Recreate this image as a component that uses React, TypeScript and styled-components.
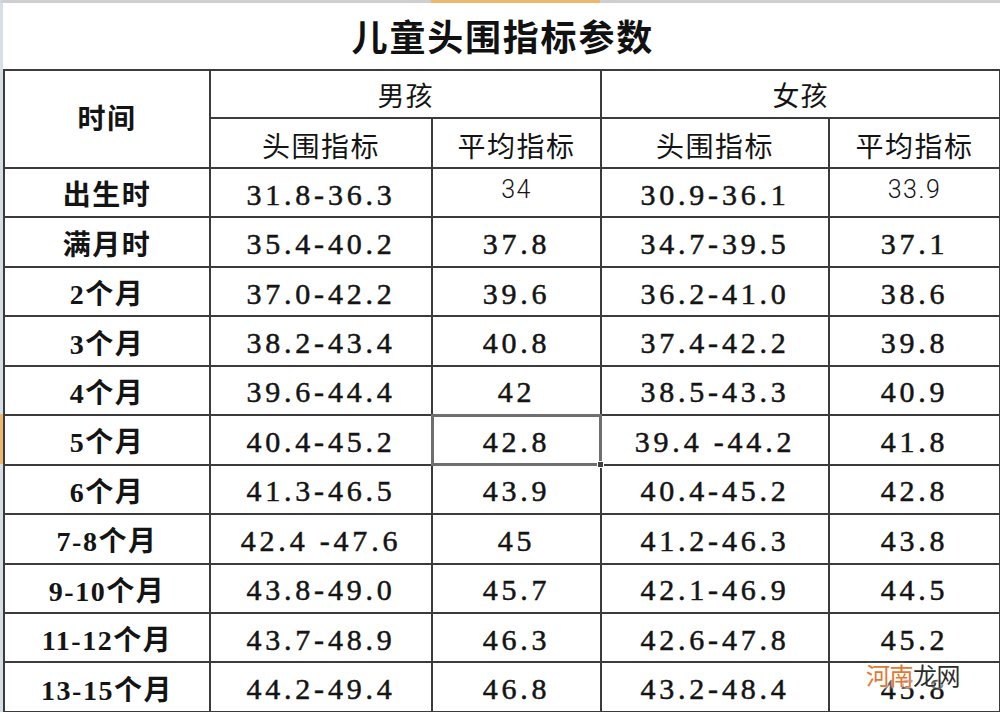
import React from "react";
import styled, { createGlobalStyle } from "styled-components";

const GlobalStyle = createGlobalStyle`
  html, body { margin: 0; padding: 0; background: #ffffff; }
  #root { width: 1000px; height: 712px; overflow: hidden; }
`;

const CJK = `"Noto Sans CJK SC", sans-serif`;
const SERIF_CJK = `"Liberation Serif", "Noto Sans CJK SC", serif`;

const Page = styled.div`
  width: 1000px;
  height: 712px;
  display: grid;
  grid-template-columns: 3px 997px;
  grid-template-rows: 3px 709px;
  background: #ffffff;
  overflow: hidden;
  position: relative;
`;

const Corner = styled.div`
  background: #cfd6de;
`;

const TopStrip = styled.div`
  display: flex;
  background: #cfcfcf;
`;

const LeftStrip = styled.div`
  display: flex;
  flex-direction: column;
  background: #d6dee7;
`;

const Spacer = styled.div<{ $size: number }>`
  flex: 0 0 ${(p) => p.$size}px;
`;

const Highlight = styled.div<{ $size: number }>`
  flex: 0 0 ${(p) => p.$size}px;
  background: #ecb870;
`;

const Sheet = styled.div`
  overflow: hidden;
`;

const Table = styled.table`
  border-collapse: collapse;
  table-layout: fixed;
  width: 996px;
  color: #141414;
`;

const Cell = styled.td<{ $padTop?: number; $padBottom?: number }>`
  border: 2px solid #3b3b3b;
  text-align: center;
  vertical-align: middle;
  padding: ${(p) => p.$padTop ?? 0}px 0 ${(p) => p.$padBottom ?? 0}px 0;
  position: relative;
  line-height: 1;
`;

const TitleCell = styled.td`
  border-top: none;
  border-left: none;
  border-right: 1px solid #c9c9c9;
  border-bottom: 2px solid #3b3b3b;
  text-align: center;
  vertical-align: middle;
  padding: 0 0 3px 2px;
  font-family: ${CJK};
  font-weight: 700;
  font-size: 36px;
  letter-spacing: 1.8px;
  color: #111;
`;

const BoldLabel = styled.span`
  font-family: ${SERIF_CJK};
  font-weight: 700;
  font-size: 28px;
  letter-spacing: 1.5px;
`;

const GroupLabel = styled.span`
  font-family: ${CJK};
  font-weight: 400;
  font-size: 27px;
  letter-spacing: 1px;
`;

const SubLabel = styled.span`
  font-family: ${CJK};
  font-weight: 400;
  font-size: 28px;
  letter-spacing: 1.5px;
`;

const Num = styled.span`
  font-family: "Liberation Serif", serif;
  font-size: 30px;
  letter-spacing: 3.8px;
  white-space: pre;
  -webkit-text-stroke: 0.5px #141414;
`;

const ThinNum = styled.span`
  font-family: "Roboto", "Liberation Sans", sans-serif;
  font-weight: 300;
  font-size: 25px;
  letter-spacing: 1.5px;
`;

const Selection = styled.div`
  position: absolute;
  left: -2px;
  top: -2px;
  right: -2px;
  bottom: -2px;
  border: 3px solid #6f6f6f;
  pointer-events: none;
`;

const FillHandle = styled.div`
  position: absolute;
  right: -5px;
  bottom: -5px;
  width: 5px;
  height: 5px;
  background: #404040;
  border: 1px solid #ffffff;
`;

const Watermark = styled.div`
  position: absolute;
  right: 40px;
  bottom: 25px;
  font-family: ${CJK};
  font-size: 24px;
  line-height: 1;
  letter-spacing: -0.5px;
  color: #2c2c2c;
  text-shadow: 0 0 2px #fff, 0 0 3px #fff, 0 0 4px #fff;
`;

const Orange = styled.span`
  color: #e5782f;
`;

type Row = [string, string, string, string, string];

const rows: Row[] = [
  ["出生时", "31.8-36.3", "34", "30.9-36.1", "33.9"],
  ["满月时", "35.4-40.2", "37.8", "34.7-39.5", "37.1"],
  ["2个月", "37.0-42.2", "39.6", "36.2-41.0", "38.6"],
  ["3个月", "38.2-43.4", "40.8", "37.4-42.2", "39.8"],
  ["4个月", "39.6-44.4", "42", "38.5-43.3", "40.9"],
  ["5个月", "40.4-45.2", "42.8", "39.4 -44.2", "41.8"],
  ["6个月", "41.3-46.5", "43.9", "40.4-45.2", "42.8"],
  ["7-8个月", "42.4 -47.6", "45", "41.2-46.3", "43.8"],
  ["9-10个月", "43.8-49.0", "45.7", "42.1-46.9", "44.5"],
  ["11-12个月", "43.7-48.9", "46.3", "42.6-47.8", "45.2"],
  ["13-15个月", "44.2-49.4", "46.8", "43.2-48.4", "45.8"],
];

const ValueCell: React.FC<{ text: string; thin: boolean; selected?: boolean }> = ({
  text,
  thin,
  selected,
}) => (
  <Cell $padTop={thin ? 0 : 4} $padBottom={thin ? 6 : 0}>
    {thin ? <ThinNum>{text}</ThinNum> : <Num>{text}</Num>}
    {selected && (
      <Selection>
        <FillHandle />
      </Selection>
    )}
  </Cell>
);

export default function App() {
  return (
    <>
      <GlobalStyle />
      <Page>
        <Corner />
        <TopStrip>
          <Spacer $size={428} />
          <Highlight $size={169} />
        </TopStrip>
        <LeftStrip>
          <Spacer $size={411} />
          <Highlight $size={50} />
        </LeftStrip>
        <Sheet>
          <Table>
            <colgroup>
              <col style={{ width: 206 }} />
              <col style={{ width: 222 }} />
              <col style={{ width: 169 }} />
              <col style={{ width: 228 }} />
              <col style={{ width: 171 }} />
            </colgroup>
            <tbody>
              <tr style={{ height: 67 }}>
                <TitleCell colSpan={5}>儿童头围指标参数</TitleCell>
              </tr>
              <tr style={{ height: 48 }}>
                <Cell rowSpan={2} $padTop={2}>
                  <BoldLabel>时间</BoldLabel>
                </Cell>
                <Cell colSpan={2} $padTop={2}>
                  <GroupLabel>男孩</GroupLabel>
                </Cell>
                <Cell colSpan={2} $padTop={2}>
                  <GroupLabel>女孩</GroupLabel>
                </Cell>
              </tr>
              <tr style={{ height: 50 }}>
                <Cell $padTop={4}>
                  <SubLabel>头围指标</SubLabel>
                </Cell>
                <Cell $padTop={4}>
                  <SubLabel>平均指标</SubLabel>
                </Cell>
                <Cell $padTop={4}>
                  <SubLabel>头围指标</SubLabel>
                </Cell>
                <Cell $padTop={4}>
                  <SubLabel>平均指标</SubLabel>
                </Cell>
              </tr>
              {rows.map((r, i) => (
                <tr key={r[0]} style={{ height: 49.45 }}>
                  <Cell $padTop={7}>
                    <BoldLabel>{r[0]}</BoldLabel>
                  </Cell>
                  <ValueCell text={r[1]} thin={false} />
                  <ValueCell text={r[2]} thin={i === 0} selected={i === 5} />
                  <ValueCell text={r[3]} thin={false} />
                  <ValueCell text={r[4]} thin={i === 0} />
                </tr>
              ))}
            </tbody>
          </Table>
        </Sheet>
        <Watermark>
          <Orange>河南</Orange>龙网
        </Watermark>
      </Page>
    </>
  );
}
